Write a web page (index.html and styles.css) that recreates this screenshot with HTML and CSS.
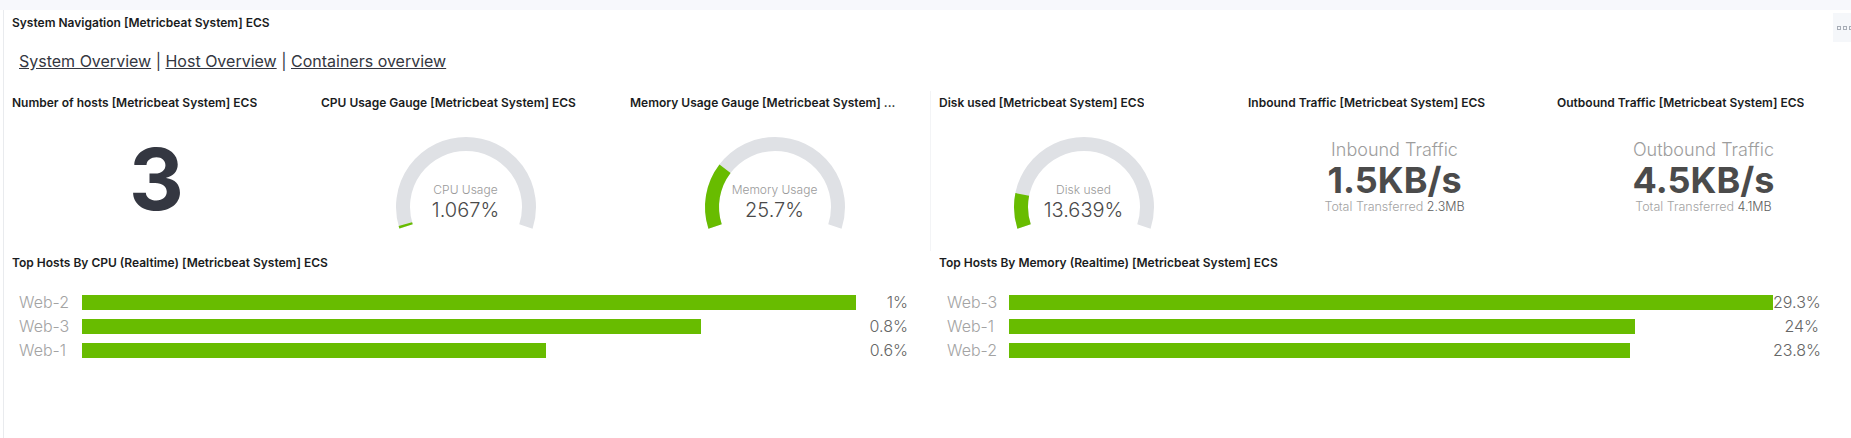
FILE: index.html
```html
<!DOCTYPE html>
<html lang="en">
<head>
<meta charset="utf-8">
<title>System Navigation [Metricbeat System] ECS</title>
<link rel="stylesheet" href="styles.css">
</head>
<body>
<div class="topbar"></div>
<main class="dashboard">
  <section class="panel panel--nav">
    <header class="panel__header panel__header--nav"><h2 class="panel__title">System Navigation [Metricbeat System] ECS</h2></header>
    <nav class="nav-links"><a href="#">System Overview</a> | <a href="#">Host Overview</a> | <a href="#">Containers overview</a></nav>
    <div class="panel__options"><span></span><span></span><span></span></div>
  </section>

  <section class="panel">
    <header class="panel__header"><h2 class="panel__title">Number of hosts [Metricbeat System] ECS</h2></header>
    <div class="panel__body"><div class="big-number">3</div></div>
  </section>

  <section class="panel">
    <header class="panel__header"><h2 class="panel__title">CPU Usage Gauge [Metricbeat System] ECS</h2></header>
    <div class="panel__body panel__body--gauge">
      <div class="gauge">
        <svg class="gauge__svg" width="160" height="104" viewBox="0 0 160 104">
          <path class="gauge__track" d="M 20.08 99.47 A 63 63 0 1 1 139.92 99.47"/>
          <path class="gauge__value" d="M 20.08 99.47 A 63 63 0 0 1 19.35 97.04"/>
        </svg>
        <div class="gauge__text"><div class="gauge__label">CPU Usage</div><div class="gauge__num">1.067%</div></div>
      </div>
    </div>
  </section>

  <section class="panel">
    <header class="panel__header"><h2 class="panel__title" title="Memory Usage Gauge [Metricbeat System] ECS">Memory Usage Gauge [Metricbeat System] ...</h2></header>
    <div class="panel__body panel__body--gauge">
      <div class="gauge">
        <svg class="gauge__svg" width="160" height="104" viewBox="0 0 160 104">
          <path class="gauge__track" d="M 20.08 99.47 A 63 63 0 1 1 139.92 99.47"/>
          <path class="gauge__value" d="M 20.08 99.47 A 63 63 0 0 1 30.02 41.65"/>
        </svg>
        <div class="gauge__text"><div class="gauge__label">Memory Usage</div><div class="gauge__num">25.7%</div></div>
      </div>
    </div>
  </section>

  <section class="panel panel--divided">
    <header class="panel__header"><h2 class="panel__title">Disk used [Metricbeat System] ECS</h2></header>
    <div class="panel__body panel__body--gauge">
      <div class="gauge">
        <svg class="gauge__svg" width="160" height="104" viewBox="0 0 160 104">
          <path class="gauge__track" d="M 20.08 99.47 A 63 63 0 1 1 139.92 99.47"/>
          <path class="gauge__value" d="M 20.08 99.47 A 63 63 0 0 1 18.26 67.48"/>
        </svg>
        <div class="gauge__text"><div class="gauge__label">Disk used</div><div class="gauge__num">13.639%</div></div>
      </div>
    </div>
  </section>

  <section class="panel">
    <header class="panel__header"><h2 class="panel__title">Inbound Traffic [Metricbeat System] ECS</h2></header>
    <div class="panel__body panel__body--stat">
      <div class="stat">
        <div class="stat__label">Inbound Traffic</div>
        <div class="stat__value">1.5KB/s</div>
        <div class="stat__sub">Total Transferred <span class="stat__subval">2.3MB</span></div>
      </div>
    </div>
  </section>

  <section class="panel">
    <header class="panel__header"><h2 class="panel__title">Outbound Traffic [Metricbeat System] ECS</h2></header>
    <div class="panel__body panel__body--stat">
      <div class="stat">
        <div class="stat__label">Outbound Traffic</div>
        <div class="stat__value">4.5KB/s</div>
        <div class="stat__sub">Total Transferred <span class="stat__subval">4.1MB</span></div>
      </div>
    </div>
  </section>

  <section class="panel panel--half">
    <header class="panel__header"><h2 class="panel__title">Top Hosts By CPU (Realtime) [Metricbeat System] ECS</h2></header>
    <div class="topn topn--cpu">
      <div class="topn__label">Web-2</div><div class="topn__track"><div class="topn__bar" style="width:100%"></div></div><div class="topn__val">1%</div>
      <div class="topn__label">Web-3</div><div class="topn__track"><div class="topn__bar" style="width:80%"></div></div><div class="topn__val">0.8%</div>
      <div class="topn__label">Web-1</div><div class="topn__track"><div class="topn__bar" style="width:60%"></div></div><div class="topn__val">0.6%</div>
    </div>
  </section>

  <section class="panel panel--half">
    <header class="panel__header"><h2 class="panel__title">Top Hosts By Memory (Realtime) [Metricbeat System] ECS</h2></header>
    <div class="topn topn--mem">
      <div class="topn__label">Web-3</div><div class="topn__track"><div class="topn__bar" style="width:100%"></div></div><div class="topn__val">29.3%</div>
      <div class="topn__label">Web-1</div><div class="topn__track"><div class="topn__bar" style="width:81.91%"></div></div><div class="topn__val">24%</div>
      <div class="topn__label">Web-2</div><div class="topn__track"><div class="topn__bar" style="width:81.23%"></div></div><div class="topn__val">23.8%</div>
    </div>
  </section>
</main>
</body>
</html>
```

FILE: styles.css
```css
* {
  box-sizing: border-box;
  margin: 0;
  padding: 0;
}

html,
body {
  width: 1851px;
  height: 438px;
  overflow: hidden;
  background: #ffffff;
}

body {
  font-family: Inter, "Noto Sans", "Liberation Sans", sans-serif;
  color: #343741;
}

.topbar {
  height: 10px;
  background: #f7f8fc;
}

.dashboard {
  display: grid;
  grid-template-columns: repeat(6, 309px);
  grid-template-rows: 81px 160px 187px;
  width: 1855px;
  margin-left: 3px;
  border-left: 1px solid #e9ebee;
}

.panel {
  display: flex;
  flex-direction: column;
  min-width: 0;
}

.panel--nav {
  grid-column: 1 / -1;
  position: relative;
}

.panel--half {
  grid-column: span 3;
}

.panel--divided {
  border-left: 1px solid #f3f4f6;
  margin-left: -1px;
}

.panel__header {
  height: 24px;
  display: flex;
  align-items: center;
  padding: 0 8px;
  flex: none;
}

.panel__header--nav {
  height: 26px;
}

.panel__title {
  font-size: 12px;
  line-height: 16px;
  font-weight: 600;
  color: #1a1c21;
  white-space: nowrap;
  overflow: hidden;
  text-overflow: ellipsis;
}

.panel__options {
  position: absolute;
  top: 3px;
  right: 0;
  width: 25px;
  height: 29px;
  background: #f5f7fa;
  display: flex;
  align-items: center;
  gap: 2px;
  padding-left: 4px;
}

.panel__options span {
  width: 4px;
  height: 4px;
  border: 1px solid #a7adb6;
  flex: none;
}

.nav-links {
  padding: 13px 15px 0;
  font-size: 16px;
  line-height: 24px;
  color: #343741;
}

.nav-links a {
  color: #343741;
  text-decoration: underline;
}

.panel__body {
  flex: 1;
  display: flex;
  align-items: center;
  justify-content: center;
  padding-bottom: 8px;
}

.panel__body--gauge {
  padding-right: 4px;
}

.panel__body--stat {
  padding-bottom: 12px;
}

.big-number {
  font-size: 85px;
  line-height: 1;
  font-weight: 700;
  color: #343741;
  margin-left: -4px;
}

.gauge {
  position: relative;
  width: 160px;
  height: 104px;
}

.gauge__svg {
  display: block;
}

.gauge__track,
.gauge__value {
  fill: none;
  stroke-width: 14;
  stroke-linecap: butt;
}

.gauge__track {
  stroke: #dfe1e5;
}

.gauge__value {
  stroke: #68bc00;
}

.gauge__text {
  position: absolute;
  left: 0;
  right: 0;
  top: 55px;
  text-align: center;
}

.gauge__label {
  font-size: 12px;
  line-height: 16px;
  font-weight: 300;
  color: #9a9a9a;
}

.gauge__num {
  font-size: 20px;
  line-height: 24px;
  font-weight: 300;
  color: #4a4a4a;
}

.stat {
  text-align: center;
}

.stat__label {
  font-size: 18px;
  line-height: 22px;
  font-weight: 300;
  color: #9d9d9d;
}

.stat__value {
  font-size: 36px;
  line-height: 38px;
  font-weight: 700;
  color: #4b4b4b;
}

.stat__sub {
  font-size: 12.5px;
  line-height: 16px;
  font-weight: 300;
  color: #a3a3a3;
}

.stat__subval {
  color: #5e5e5e;
}

.topn {
  display: grid;
  row-gap: 9px;
  align-items: center;
  padding-top: 20px;
}

.topn--cpu {
  grid-template-columns: 62.5px 1fr 52px;
  padding-left: 15px;
  padding-right: 23px;
}

.topn--mem {
  grid-template-columns: 62px 1fr 46px;
  padding-left: 16px;
  padding-right: 39px;
}

.topn__label {
  font-size: 16px;
  line-height: 15px;
  font-weight: 300;
  color: #a3a3a3;
  white-space: nowrap;
}

.topn__track {
  height: 15px;
}

.topn__bar {
  height: 15px;
  background: #68bc00;
}

.topn__val {
  font-size: 16px;
  line-height: 15px;
  font-weight: 300;
  color: #666666;
  text-align: right;
  white-space: nowrap;
}
```
